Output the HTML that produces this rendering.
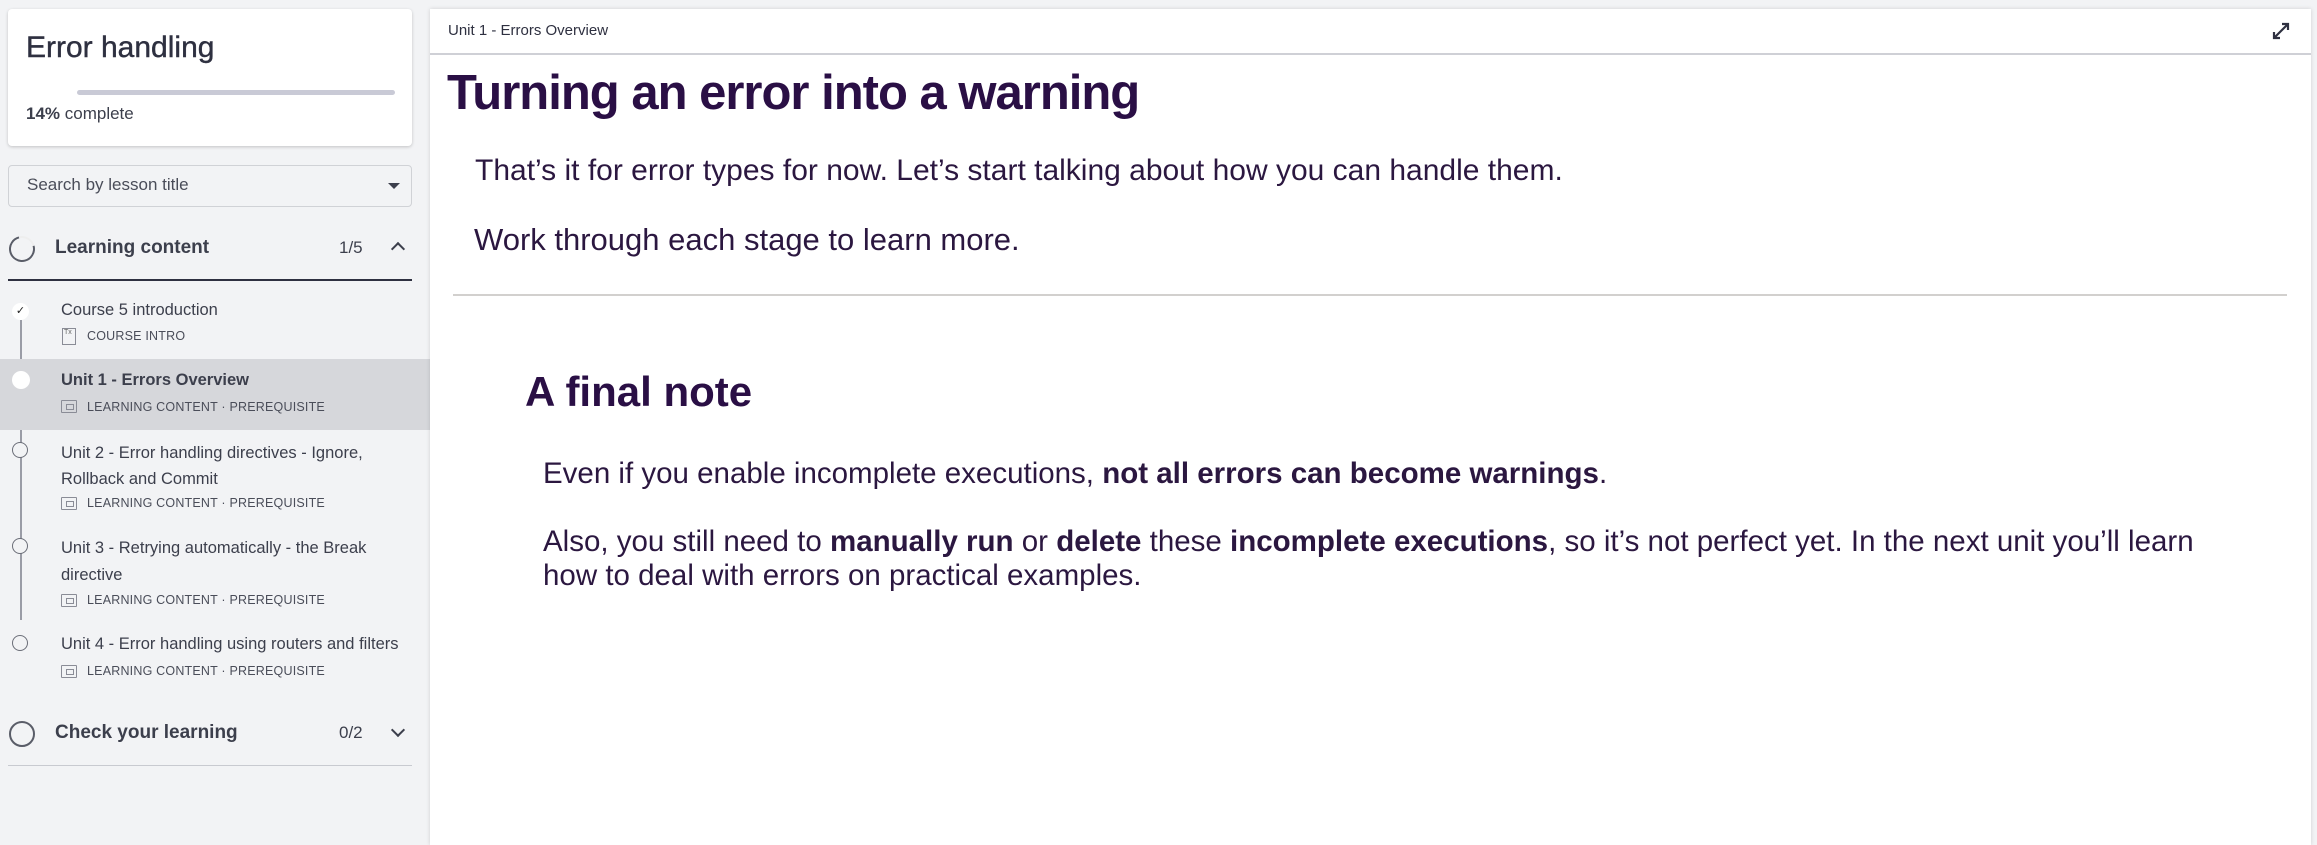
<!DOCTYPE html>
<html><head><meta charset="utf-8"><style>
*{margin:0;padding:0;box-sizing:border-box}
body{width:2317px;height:845px;overflow:hidden;background:#f2f3f5;font-family:"Liberation Sans",sans-serif;position:relative}
.a{position:absolute;white-space:nowrap}
.card{position:absolute;left:8px;top:9px;width:404px;height:137px;background:#fff;border-radius:4px;box-shadow:0 1px 3px rgba(0,0,0,.2)}
.sb{color:#3c3f4c}
.sub{font-size:12.5px;color:#4a4d59;letter-spacing:.2px}
.ic{position:absolute;width:16px;height:13px;border:1.5px solid #8a8c96;border-radius:1px}
.ic:after{content:"";position:absolute;right:2px;bottom:2px;width:6px;height:4px;border:1px solid #8a8c96}
.circ{position:absolute;width:16px;height:16px;border:1.5px solid #6b6e78;border-radius:50%;background:#f2f3f5}
.main{position:absolute;left:430px;top:9px;width:1881px;height:836px;background:#fff;box-shadow:0 0 4px rgba(0,0,0,.15)}
.p{color:#2b1740;font-size:30px}
</style></head><body>
<div class="card"></div>
<div class="a sb" style="left:26px;top:31px;font-size:30px;color:#2e3040;-webkit-text-stroke:.4px #2e3040">Error handling</div>
<div class="a" style="left:77px;top:90px;width:318px;height:5px;background:#c9cad6;border-radius:3px"></div>
<div class="a sb" style="left:26px;top:104px;font-size:17px"><b style="font-weight:600">14%</b> complete</div>
<div class="a" style="left:8px;top:165px;width:404px;height:42px;border:1px solid #d0d2d6;border-radius:4px"></div>
<div class="a" style="left:27px;top:175px;font-size:17px;color:#4a4d59">Search by lesson title</div>
<div class="a" style="left:388px;top:183px;border-left:6px solid transparent;border-right:6px solid transparent;border-top:6px solid #3c3f4c"></div>
<div class="a" style="left:9px;top:236px;width:26px;height:26px;border:2.5px solid #5a5d68;border-top-color:#eee;border-radius:50%;transform:rotate(30deg)"></div>
<div class="a sb" style="left:55px;top:237px;font-size:19px;font-weight:bold">Learning content</div>
<div class="a sb" style="left:339px;top:238px;font-size:17px">1/5</div>
<div class="a" style="left:393px;top:244px;width:10px;height:10px;border-left:2px solid #3c3f4c;border-top:2px solid #3c3f4c;transform:rotate(45deg)"></div>
<div class="a" style="left:8px;top:279px;width:404px;height:1.5px;background:#2e3040"></div>
<div class="a" style="left:20px;top:320px;width:1.5px;height:300px;background:#9a9ca6"></div>
<div class="a" style="left:0;top:359px;width:430px;height:71px;background:#d6d7db"></div>
<div class="a" style="left:12px;top:303px;width:17px;height:17px;border-radius:50%;background:#fff;font-size:11px;text-align:center;line-height:17px;color:#222">✓</div>
<div class="a sb" style="left:61px;top:301px;font-size:16.5px">Course 5 introduction</div>
<div class="a" style="left:62px;top:328px;width:14px;height:17px;border:1.5px solid #8a8c96;font-size:7px;color:#666;padding-left:1px">Tx</div>
<div class="a sub" style="left:87px;top:329px">COURSE INTRO</div>
<div class="a" style="left:12px;top:371px;width:18px;height:18px;border-radius:50%;background:#fff"></div>
<div class="a sb" style="left:61px;top:371px;font-size:16.5px;font-weight:bold">Unit 1 - Errors Overview</div>
<div class="ic" style="left:61px;top:400px"></div><div class="a sub" style="left:87px;top:400px">LEARNING CONTENT · PREREQUISITE</div>
<div class="circ" style="left:12px;top:442px"></div>
<div class="a sb" style="left:61px;top:440px;font-size:16.5px;line-height:26px">Unit 2 - Error handling directives - Ignore,<br>Rollback and Commit</div>
<div class="ic" style="left:61px;top:497px"></div><div class="a sub" style="left:87px;top:496px">LEARNING CONTENT · PREREQUISITE</div>
<div class="circ" style="left:12px;top:538px"></div>
<div class="a sb" style="left:61px;top:535px;font-size:16.5px;line-height:27px">Unit 3 - Retrying automatically - the Break<br>directive</div>
<div class="ic" style="left:61px;top:594px"></div><div class="a sub" style="left:87px;top:593px">LEARNING CONTENT · PREREQUISITE</div>
<div class="circ" style="left:12px;top:635px"></div>
<div class="a sb" style="left:61px;top:635px;font-size:16.5px">Unit 4 - Error handling using routers and filters</div>
<div class="ic" style="left:61px;top:665px"></div><div class="a sub" style="left:87px;top:664px">LEARNING CONTENT · PREREQUISITE</div>
<div class="a" style="left:9px;top:721px;width:26px;height:26px;border:2.5px solid #5a5d68;border-radius:50%"></div>
<div class="a sb" style="left:55px;top:722px;font-size:19px;font-weight:bold">Check your learning</div>
<div class="a sb" style="left:339px;top:723px;font-size:17px">0/2</div>
<div class="a" style="left:393px;top:725px;width:10px;height:10px;border-right:2px solid #3c3f4c;border-bottom:2px solid #3c3f4c;transform:rotate(45deg)"></div>
<div class="a" style="left:8px;top:765px;width:404px;height:1px;background:#c8cad0"></div>

<div class="main"></div>
<div class="a" style="left:448px;top:22px;font-size:15px;color:#2e3040">Unit 1 - Errors Overview</div>
<svg class="a" style="left:2271px;top:21px" width="20" height="20" viewBox="0 0 20 20" fill="none" stroke="#2e3040" stroke-width="2.2"><path d="M3 17L17 3M11 3h6v6M3 11v6h6"/></svg>
<div class="a" style="left:430px;top:53px;width:1881px;height:1.5px;background:#cfd0d6"></div>
<div class="a" style="left:447px;top:65px;font-size:49px;font-weight:bold;color:#2a0f45;letter-spacing:-1px">Turning an error into a warning</div>
<div class="a p" style="left:475px;top:154px">That’s it for error types for now. Let’s start talking about how you can handle them.</div>
<div class="a p" style="left:474px;top:222px;font-size:31px">Work through each stage to learn more.</div>
<div class="a" style="left:453px;top:294px;width:1834px;height:2px;background:#d2d0ce"></div>
<div class="a" style="left:525px;top:368px;font-size:42px;font-weight:bold;color:#2a0f45">A final note</div>
<div class="a p" style="left:543px;top:457px;font-size:29.5px">Even if you enable incomplete executions, <b>not all errors can become warnings</b>.</div>
<div class="a p" style="left:543px;top:525px;line-height:34px;font-size:29.5px">Also, you still need to <b>manually run</b> or <b>delete</b> these <b>incomplete executions</b>, so it’s not perfect yet. In the next unit you’ll learn<br>how to deal with errors on practical examples.</div>
</body></html>
